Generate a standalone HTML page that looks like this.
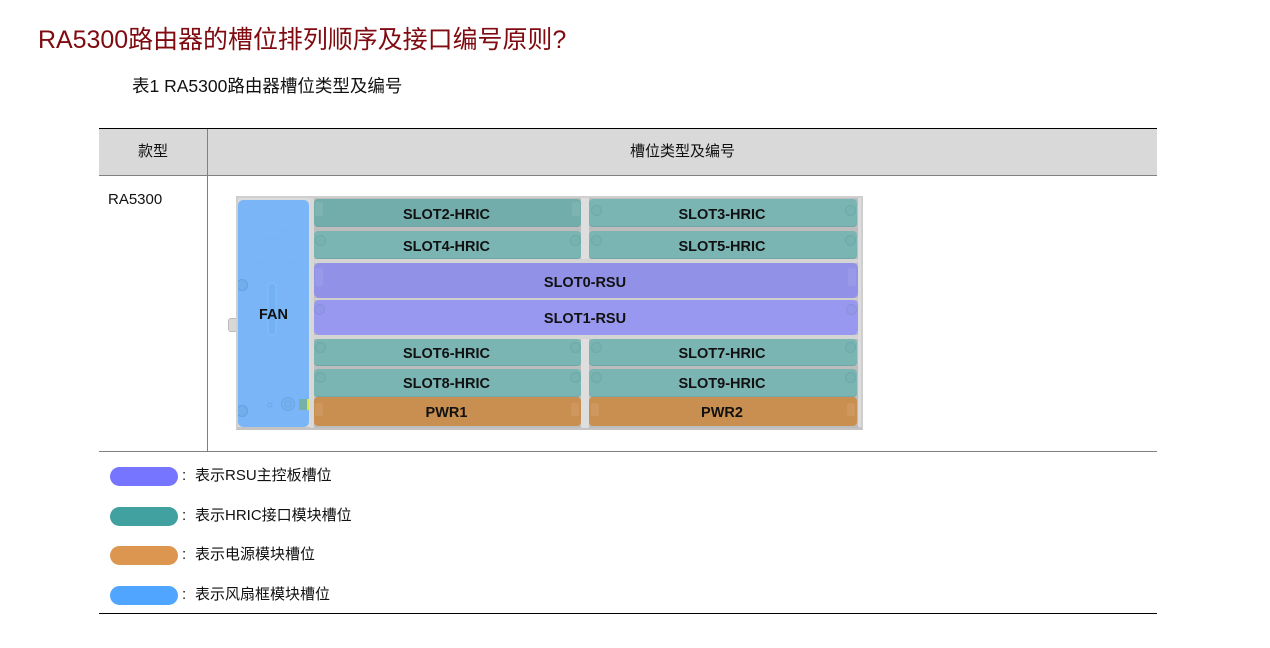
<!DOCTYPE html>
<html lang="zh">
<head>
<meta charset="utf-8">
<title>RA5300</title>
<style>
html,body{margin:0;padding:0;background:#fff}
body{width:1270px;height:648px;position:relative;overflow:hidden;font-family:"Liberation Sans","Noto Sans CJK SC",sans-serif;color:#000}
.a{position:absolute;white-space:nowrap}
.line{position:absolute}
.s{position:absolute;border-radius:4px;text-align:center;font-weight:bold;font-size:14.5px;color:#111;overflow:hidden;filter:blur(.3px)}
.s b{position:relative;left:-1px;top:1px}
.t{background:#7ab5b3;box-shadow:inset 0 -1px 0 #6fa8a6}
.p{background:#9898f0}
.o{background:#c98f51}
.c{position:absolute;width:11px;height:11px;border-radius:50%;border:1px solid rgba(70,110,120,.14);background:rgba(70,120,130,.05);box-sizing:border-box}
.k{position:absolute;width:8px;height:18px;border-radius:2px;background:rgba(255,255,255,.08)}
.pill{position:absolute;left:110px;width:68px;height:19px;border-radius:9.5px}
.leg{position:absolute;left:195px;font-size:15px;line-height:20px;white-space:nowrap;color:#111}
.col{position:absolute;left:182px;font-size:15px;line-height:20px;color:#111}
.fan{position:absolute;left:0;top:1px;width:71px;line-height:228px;text-align:center}
</style>
</head>
<body>
<div class="a" style="left:38px;top:25px;font-size:24.96px;line-height:30px;color:#7f0a10">RA5300路由器的槽位排列顺序及接口编号原则?</div>
<div class="a" style="left:132px;top:75px;font-size:17.5px;line-height:22px;color:#111">表1 RA5300路由器槽位类型及编号</div>

<div class="line" style="left:99px;top:128px;width:1058px;height:48px;background:#d9d9d9"></div>
<div class="line" style="left:99px;top:128px;width:1058px;height:1px;background:#000"></div>
<div class="line" style="left:99px;top:175px;width:1058px;height:1px;background:#808080"></div>
<div class="line" style="left:207px;top:129px;width:1px;height:322px;background:#808080"></div>
<div class="line" style="left:99px;top:451px;width:1058px;height:1px;background:#808080"></div>
<div class="line" style="left:99px;top:613px;width:1058px;height:1px;background:#000"></div>

<div class="a" style="left:138px;top:142px;font-size:15px;line-height:20px;color:#111">款型</div>
<div class="a" style="left:630px;top:142px;font-size:15px;line-height:20px;color:#111">槽位类型及编号</div>
<div class="a" style="left:108px;top:190px;font-size:15px;line-height:20px;color:#111">RA5300</div>

<!-- chassis -->
<div class="line" style="left:228px;top:318px;width:9px;height:14px;background:#d8d8d8;border:1px solid #bbb;border-radius:3px 0 0 3px;box-sizing:border-box"></div>
<div class="line" style="left:236px;top:196px;width:627px;height:234px;background:#dcdcdc;border:2px solid #cfcfcf;box-sizing:border-box;border-bottom:3px solid #c4c4c4"></div>
<div class="line" style="left:313px;top:198px;width:545px;height:230px;background:#bdbdbd"></div>
<div class="line" style="left:581px;top:198px;width:8px;height:61px;background:#dedede"></div>
<div class="line" style="left:581px;top:338px;width:8px;height:90px;background:#dedede"></div>
<div class="line" style="left:310px;top:198px;width:4px;height:230px;background:#d8d8d8"></div>

<!-- fan -->
<div class="s" style="left:238px;top:200px;width:71px;height:227px;background:#7ab5f7;border-radius:5px;">
  <svg style="position:absolute;left:0;top:0" width="71" height="227" viewBox="0 0 71 227">
    <g fill="none" stroke="#74b1f2" stroke-width=".6">
      <rect x="23" y="30" width="26" height="7" rx="2"/>
      <path d="M10 40H62M10 64H62M26 40V48M26 56V74M10 74H62M10 40V74"/>
      <path d="M18 44h6M36 44h6M50 44h6M18 52h6M50 52h6M30 60h12M18 62h6M50 62h6M18 70h6M50 70h6"/>
    </g>
    <rect x="30" y="83" width="8" height="52" rx="4" fill="#72b1f4" stroke="#86bdf8"/>
    <circle cx="4" cy="85" r="5.5" fill="#72aeee" stroke="#659fdc"/>
    <circle cx="4" cy="211" r="5.5" fill="#72aeee" stroke="#659fdc"/>
    <circle cx="50" cy="204" r="6.5" fill="#76b0f0" stroke="#6ca6e4"/>
    <circle cx="50" cy="204" r="3" fill="none" stroke="#6ca6e4"/>
    <circle cx="32" cy="205" r="2" fill="none" stroke="#6ca6e4"/>
    <rect x="61" y="199" width="10" height="11" fill="#77b0a8"/>
    <rect x="69" y="199" width="2" height="11" fill="#dde34a"/>
  </svg>
  <span class="fan">FAN</span>
</div>

<!-- HRIC rows -->
<div class="s t" style="left:314px;top:199px;width:267px;height:28px;line-height:30px;background:#72adab"><i class="k" style="left:258px;top:3px;height:14px"></i><i class="k" style="left:1px;top:3px;height:14px"></i><b>SLOT2-HRIC</b></div>
<div class="s t" style="left:589px;top:199px;width:268px;height:28px;line-height:30px"><i class="c" style="left:2px;top:6px"></i><i class="c" style="left:256px;top:6px"></i><b>SLOT3-HRIC</b></div>
<div class="s t" style="left:314px;top:231px;width:267px;height:28px;line-height:30px"><i class="c" style="left:1px;top:4px"></i><i class="c" style="left:256px;top:4px"></i><b>SLOT4-HRIC</b></div>
<div class="s t" style="left:589px;top:231px;width:268px;height:28px;line-height:30px"><i class="c" style="left:2px;top:4px"></i><i class="c" style="left:256px;top:4px"></i><b>SLOT5-HRIC</b></div>

<div class="line" style="left:313px;top:259px;width:545px;height:4px;background:#d4d4d4"></div>
<div class="s p" style="left:314px;top:263px;width:544px;height:35px;line-height:38px;background:#9191e8;border-radius:5px"><i class="k" style="left:1px;top:5px"></i><i class="k" style="left:534px;top:5px"></i><b>SLOT0-RSU</b></div>
<div class="line" style="left:313px;top:298px;width:545px;height:2px;background:#cfcfcf"></div>
<div class="s p" style="left:314px;top:300px;width:544px;height:35px;line-height:36px;border-radius:5px"><i class="c" style="left:0;top:4px"></i><i class="c" style="left:532px;top:4px"></i><b>SLOT1-RSU</b></div>
<div class="line" style="left:313px;top:335px;width:545px;height:4px;background:#d4d4d4"></div>

<div class="s t" style="left:314px;top:339px;width:267px;height:27px;line-height:29px"><i class="c" style="left:1px;top:3px"></i><i class="c" style="left:256px;top:3px"></i><b>SLOT6-HRIC</b></div>
<div class="s t" style="left:589px;top:339px;width:268px;height:27px;line-height:29px"><i class="c" style="left:2px;top:3px"></i><i class="c" style="left:256px;top:3px"></i><b>SLOT7-HRIC</b></div>
<div class="s t" style="left:314px;top:369px;width:267px;height:28px;line-height:28px"><i class="c" style="left:1px;top:3px"></i><i class="c" style="left:256px;top:3px"></i><b>SLOT8-HRIC</b></div>
<div class="s t" style="left:589px;top:369px;width:268px;height:28px;line-height:28px"><i class="c" style="left:2px;top:3px"></i><i class="c" style="left:256px;top:3px"></i><b>SLOT9-HRIC</b></div>
<div class="s o" style="left:314px;top:397px;width:267px;height:29px;line-height:30px"><i class="k" style="left:1px;top:6px;height:13px"></i><i class="k" style="left:257px;top:6px;height:13px"></i><b>PWR1</b></div>
<div class="s o" style="left:589px;top:397px;width:268px;height:29px;line-height:30px"><i class="k" style="left:2px;top:6px;height:13px"></i><i class="k" style="left:258px;top:6px;height:13px"></i><b>PWR2</b></div>

<!-- legend -->
<div class="pill" style="top:467px;background:#7575ff"></div>
<div class="col" style="top:466px">:</div>
<div class="leg" style="top:466px">表示RSU主控板槽位</div>
<div class="pill" style="top:507px;background:#41a0a0"></div>
<div class="col" style="top:506px">:</div>
<div class="leg" style="top:506px">表示HRIC接口模块槽位</div>
<div class="pill" style="top:546px;background:#dc9650"></div>
<div class="col" style="top:545px">:</div>
<div class="leg" style="top:545px">表示电源模块槽位</div>
<div class="pill" style="top:586px;background:#50a5ff"></div>
<div class="col" style="top:585px">:</div>
<div class="leg" style="top:585px">表示风扇框模块槽位</div>
</body>
</html>
